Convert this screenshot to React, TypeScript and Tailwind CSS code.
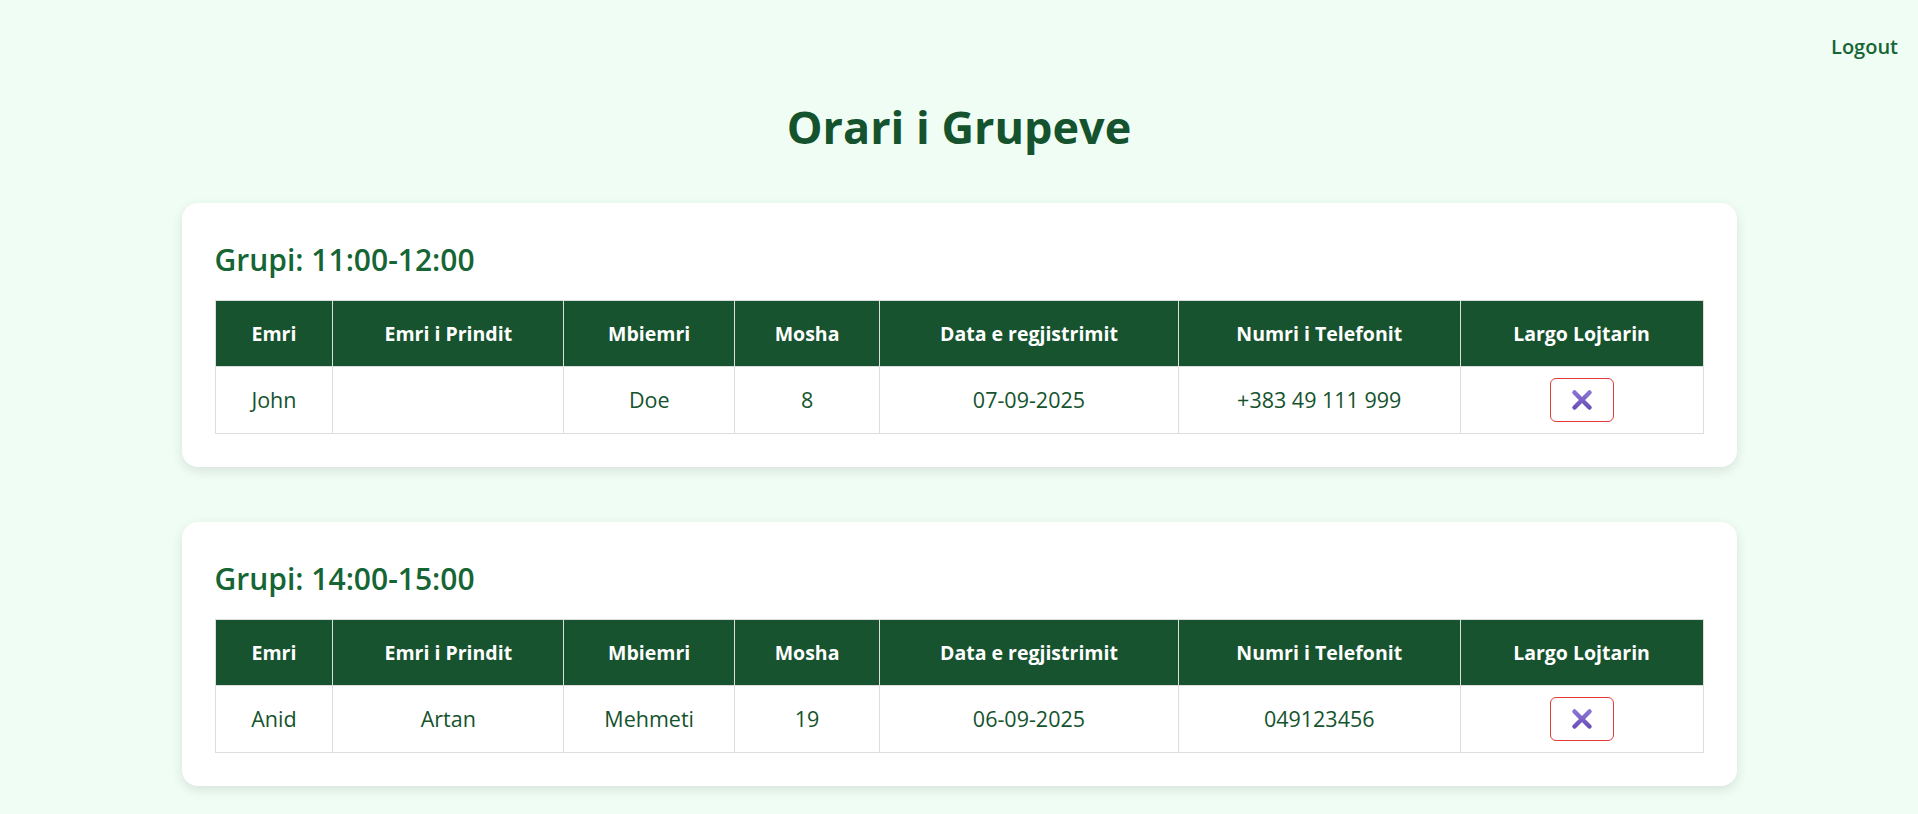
import React from 'react';

type Player = {
  emri: string;
  prindi: string;
  mbiemri: string;
  mosha: string;
  data: string;
  telefoni: string;
};

const groups: { time: string; players: Player[] }[] = [
  {
    time: '11:00-12:00',
    players: [
      { emri: 'John', prindi: '', mbiemri: 'Doe', mosha: '8', data: '07-09-2025', telefoni: '+383 49 111 999' },
    ],
  },
  {
    time: '14:00-15:00',
    players: [
      { emri: 'Anid', prindi: 'Artan', mbiemri: 'Mehmeti', mosha: '19', data: '06-09-2025', telefoni: '049123456' },
    ],
  },
];

const columns = [
  { label: 'Emri', width: 'w-[118px]' },
  { label: 'Emri i Prindit', width: 'w-[231px]' },
  { label: 'Mbiemri', width: 'w-[171px]' },
  { label: 'Mosha', width: 'w-[145px]' },
  { label: 'Data e regjistrimit', width: 'w-[299px]' },
  { label: 'Numri i Telefonit', width: 'w-[282px]' },
  { label: 'Largo Lojtarin', width: 'w-[243px]' },
];

const CrossIcon = () => (
  <svg width="22" height="22" viewBox="0 0 22 22">
    <defs>
      <linearGradient id="xgrad" x1="0" y1="0" x2="0" y2="1">
        <stop offset="0" stopColor="#8a72d4" />
        <stop offset="1" stopColor="#6b51b9" />
      </linearGradient>
    </defs>
    <path d="M3.5 3.5 L18.5 18.5 M18.5 3.5 L3.5 18.5" stroke="url(#xgrad)" strokeWidth="4.5" strokeLinecap="round" fill="none" />
  </svg>
);

const GroupCard = ({ time, players }: { time: string; players: Player[] }) => {
  return (
    <div className="bg-white rounded-[16px] p-[33px] shadow-[0_4px_12px_rgba(0,0,0,0.10)]">
      <h2 className="mt-[4px] text-[30px] leading-[40px] font-semibold text-[#166534] mb-[20px]">Grupi: {time}</h2>
      <table className="w-full border-collapse text-[21.5px]">
        <thead>
          <tr className="bg-[#17532f]">
            {columns.map((c) => (
              <th
                key={c.label}
                className={`${c.width} border border-[#dddddd] py-[16px] leading-[33px] text-[19.5px] font-bold text-white text-center`}
              >
                {c.label}
              </th>
            ))}
          </tr>
        </thead>
        <tbody>
          {players.map((p) => (
            <tr key={p.emri} className="text-[#14532d]">
              <td className="border border-[#dddddd] py-[11px] leading-[32px] text-center">{p.emri}</td>
              <td className="border border-[#dddddd] py-[11px] leading-[32px] text-center">{p.prindi}</td>
              <td className="border border-[#dddddd] py-[11px] leading-[32px] text-center">{p.mbiemri}</td>
              <td className="border border-[#dddddd] py-[11px] leading-[32px] text-center">{p.mosha}</td>
              <td className="border border-[#dddddd] py-[11px] leading-[32px] text-center">{p.data}</td>
              <td className="border border-[#dddddd] py-[11px] leading-[32px] text-center">{p.telefoni}</td>
              <td className="border border-[#dddddd] py-[11px] text-center">
                <button className="inline-flex items-center justify-center w-[64px] h-[44px] align-middle bg-white border border-[#e53935] rounded-[6px]">
                  <CrossIcon />
                </button>
              </td>
            </tr>
          ))}
        </tbody>
      </table>
    </div>
  );
};

export default function App() {
  return (
    <div className="min-h-screen bg-[#f0fdf4] font-['Open_Sans',sans-serif] pb-[40px]">
      {/* top bar */}
      <div className="flex justify-end pt-[31px] pr-[20px]">
        <button className="text-[20px] leading-[32px] font-semibold text-[#166534] bg-transparent">Logout</button>
      </div>

      <h1 className="mt-[35px] text-center text-[45px] leading-[58px] font-bold text-[#14532d]">Orari i Grupeve</h1>

      {/* grupet */}
      <div className="w-[1555px] mx-auto mt-[47px] flex flex-col gap-[55px]">
        {groups.map((g) => (
          <GroupCard key={g.time} time={g.time} players={g.players} />
        ))}
      </div>
    </div>
  );
}
